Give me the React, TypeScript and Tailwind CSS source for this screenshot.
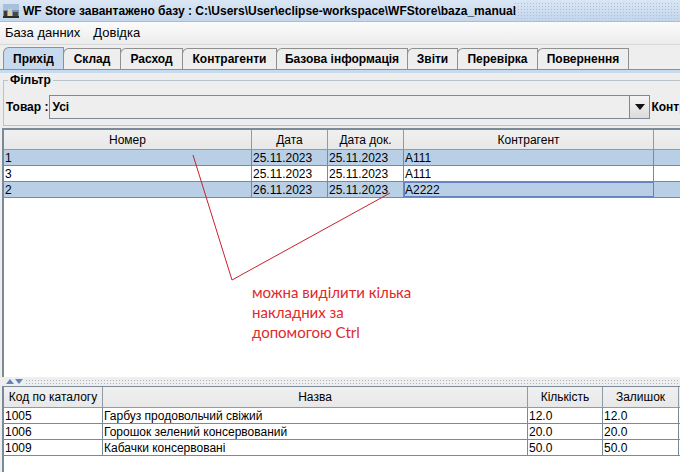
const tabs = ['Прихід', 'Склад', 'Расход', 'Контрагенти', 'Базова інформація', 'Звіти', 'Перевірка', 'Повернення']
const tabWidths = [61, 58, 63, 95, 132, 51, 81, 92]

const topCols = [
  { label: 'Номер', w: 248 },
  { label: 'Дата', w: 76 },
  { label: 'Дата док.', w: 76 },
  { label: 'Контрагент', w: 250 },
  { label: '', w: 40 },
]

const topRows = [
  { cells: ['1', '25.11.2023', '25.11.2023', 'A111', ''], selected: true },
  { cells: ['3', '25.11.2023', '25.11.2023', 'A111', ''], selected: false },
  { cells: ['2', '26.11.2023', '25.11.2023', 'A2222', ''], selected: true, focus: 3 },
]

const bottomCols = [
  { label: 'Код по каталогу', w: 99 },
  { label: 'Назва', w: 425 },
  { label: 'Кількість', w: 75 },
  { label: 'Залишок', w: 76 },
  { label: '', w: 20 },
]

const bottomRows = [
  ['1005', 'Гарбуз продовольчий свіжий', '12.0', '12.0', 'ш'],
  ['1006', 'Горошок зелений консервований', '20.0', '20.0', 'ш'],
  ['1009', 'Кабачки консервовані', '50.0', '50.0', 'ш'],
]

function TitleIcon() {
  return (
    <svg width="16" height="14" viewBox="0 0 16 14" className="shrink-0">
      <rect x="0" y="0" width="16" height="14" fill="#7a94b8" />
      <rect x="0" y="0" width="16" height="6" fill="#a9c0dc" />
      <rect x="1" y="7" width="3" height="6" fill="#3b3b30" />
      <rect x="5" y="5" width="4" height="8" fill="#d8cfa8" />
      <rect x="10" y="8" width="5" height="5" fill="#4a4a3a" />
      <rect x="0" y="12" width="16" height="2" fill="#2e2e24" />
    </svg>
  )
}

export default function App() {
  return (
    <div
      className="relative w-[680px] h-[472px] overflow-hidden bg-[#eeeeee] flex flex-col text-[12px] text-black"
      style={{ fontFamily: '"Liberation Sans", Arial, sans-serif' }}
    >
      {/* Title bar */}
      <div className="h-[22px] shrink-0 flex items-center bg-gradient-to-b from-[#dae6f4] to-[#c4d6ec] border-b border-[#a8bcd6]">
        <div className="flex items-center gap-[4px] pl-[3px] w-[514px]">
          <TitleIcon />
          <span className="font-bold text-[12px] whitespace-nowrap">
            WF Store завантажено базу : C:\Users\User\eclipse-workspace\WFStore\baza_manual
          </span>
        </div>
        <div className="flex-1 h-[18px] bg-[radial-gradient(#aabfd8_0.8px,transparent_0.9px)] bg-[length:3px_3px]" />
      </div>

      {/* Menu bar */}
      <div className="h-[23px] shrink-0 flex items-center gap-[13px] pl-[5px] text-[13px] bg-gradient-to-b from-[#fbfbfb] to-[#ececec] border-b border-[#d8d8d8]">
        <span>База данних</span>
        <span>Довідка</span>
      </div>

      {/* Tabs */}
      <div className="h-[24px] shrink-0 flex items-end pl-[3px] pt-[3px]">
        {tabs.map((t, i) => (
          <div
            key={t}
            style={{ width: tabWidths[i] }}
            className={`flex items-center justify-center font-bold border-t border-l border-r border-[#8e8f8f] rounded-tl-[6px] -mr-px ${
              i === 0 ? 'bg-[#c8daee] h-[22px]' : 'bg-[#eeeeee] h-[21px]'
            }`}
          >
            {t}
          </div>
        ))}
      </div>
      <div className="h-[4px] shrink-0 bg-[#c8daee] border-t border-[#8e8f8f]" />

      {/* Tab content */}
      <div className="flex-1 flex flex-col pl-[2px]">
        {/* Filter group */}
        <div className="mt-[7px] ml-[1px] h-[46px] border border-[#b8c3cc] relative w-[700px] shrink-0">
          <span className="absolute -top-[8px] left-[4px] bg-[#eeeeee] px-[2px] font-bold leading-[14px]">
            Фільтр
          </span>
          <div className="flex items-center h-full pt-[8px] pl-[2px]">
            <span className="font-bold whitespace-nowrap shrink-0">Товар :</span>
            <div className="shrink-0 ml-[1px] w-[601px] h-[24px] border border-[#7a8a99] flex items-center bg-[#eeeeee]">
              <div className="flex-1 flex items-center pl-[2px] font-bold">Усі</div>
              <div className="w-[20px] h-full border-l border-[#7a8a99] flex items-center justify-center bg-gradient-to-b from-[#f4f4f4] to-[#dcdcdc]">
                <svg width="10" height="6" viewBox="0 0 10 6">
                  <polygon points="0,0 10,0 5,6" fill="#111" />
                </svg>
              </div>
            </div>
            <span className="font-bold ml-[1px] whitespace-nowrap shrink-0">Контрагент</span>
          </div>
        </div>

        {/* Top table */}
        <div className="mt-[2px] h-[249px] shrink-0 bg-white border-t-2 border-l-2 border-[#7a8a99] flex flex-col">
          <div className="flex h-[20px] bg-[#eeeeee] border-b border-[#8e9aa6]">
            {topCols.map((c, i) => (
              <div
                key={i}
                style={{ width: c.w }}
                className="shrink-0 flex items-center justify-center border-r border-[#8e9aa6] bg-gradient-to-b from-[#f0f0f0] to-[#e8e8e8]"
              >
                {c.label}
              </div>
            ))}
          </div>
          {topRows.map((r, ri) => (
            <div key={ri} className={`flex h-[16px] border-b border-[#7a8a99] ${r.selected ? 'bg-[#b8cfe5]' : 'bg-white'}`}>
              {r.cells.map((c, ci) => (
                <div
                  key={ci}
                  style={{ width: topCols[ci].w }}
                  className={`shrink-0 flex items-center pl-[1px] leading-none border-r border-[#7a8a99] ${
                    r.focus === ci ? 'outline outline-1 outline-[#6382bf] -outline-offset-1' : ''
                  }`}
                >
                  {c}
                </div>
              ))}
            </div>
          ))}
        </div>

        {/* Splitter */}
        <div className="h-[10px] shrink-0 flex items-center bg-[#eeeeee] border-b border-[#7a8a99]">
          <div className="flex items-center gap-[1px] pl-[4px] pr-[2px]">
            <svg width="8" height="5" viewBox="0 0 8 5">
              <polygon points="0,5 8,5 4,0" fill="#6382bf" />
            </svg>
            <svg width="8" height="5" viewBox="0 0 8 5">
              <polygon points="0,0 8,0 4,5" fill="#6382bf" />
            </svg>
          </div>
          <div className="flex-1 h-[6px] bg-[radial-gradient(#a8b4c2_0.7px,transparent_0.8px)] bg-[length:3px_3px]" />
        </div>

        {/* Bottom table */}
        <div className="flex-1 bg-white border-l-2 border-[#7a8a99] flex flex-col">
          <div className="flex h-[21px] bg-[#eeeeee] border-b border-[#8e9aa6]">
            {bottomCols.map((c, i) => (
              <div
                key={i}
                style={{ width: c.w }}
                className="shrink-0 flex items-center justify-center whitespace-nowrap border-r border-[#8e9aa6] bg-gradient-to-b from-[#f0f0f0] to-[#e8e8e8]"
              >
                {c.label}
              </div>
            ))}
          </div>
          {bottomRows.map((r, ri) => (
            <div key={ri} className="flex h-[16px] border-b border-[#7a8a99]">
              {r.map((c, ci) => (
                <div
                  key={ci}
                  style={{ width: bottomCols[ci].w }}
                  className="shrink-0 flex items-center pl-[1px] leading-none border-r border-[#7a8a99] overflow-hidden"
                >
                  {c}
                </div>
              ))}
            </div>
          ))}
        </div>
      </div>

      {/* Annotation */}
      <svg className="absolute left-0 top-0 pointer-events-none" width="680" height="472">
        <polyline points="193,155 232,280 390,193" fill="none" stroke="#c8202c" strokeWidth="1" />
      </svg>
      <div
        className="absolute left-[252px] top-[282px] text-[15px] leading-[20px] text-[#e0282e]"
        style={{ fontFamily: 'Lato, "Open Sans", sans-serif' }}
      >
        можна виділити кілька
        <br />
        накладних за
        <br />
        допомогою Ctrl
      </div>
    </div>
  )
}
